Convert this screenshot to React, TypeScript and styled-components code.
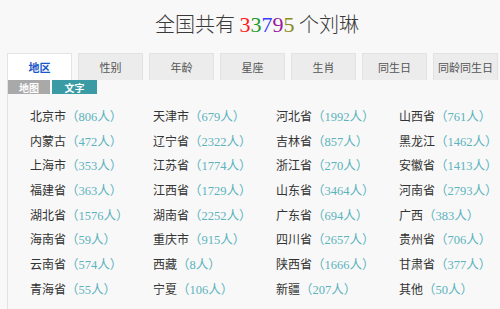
import styled, { createGlobalStyle } from "styled-components";

const GlobalStyle = createGlobalStyle`
	body {
		margin: 0;
		background: #f8f8f8;
		font-family: "Noto Sans CJK SC", "Noto Sans", sans-serif;
		color: #333;
	}
`;

const Page = styled.div`
	width: 500px;
	height: 309px;
	overflow: hidden;
`;

const Title = styled.h1`
	margin: 0;
	height: 53px;
	padding: 10px 0 0 14px;
	box-sizing: border-box;
	text-align: center;
	font-size: 20px;
	font-weight: 300;
	line-height: 28px;
	color: #3a3a3a;
`;

const Digit = styled.span<{ $color: string }>`
	font-family: "Liberation Serif", serif;
	font-size: 22px;
	color: ${(p) => p.$color};
`;

const TabBar = styled.div`
	display: flex;
	gap: 6px;
	padding-left: 7px;
	height: 27px;
`;

const Tab = styled.div<{ $active?: boolean }>`
	width: 65px;
	box-sizing: border-box;
	display: flex;
	align-items: center;
	justify-content: center;
	font-size: 11px;
	background: ${(p) => (p.$active ? "#fff" : "#ececec")};
	border: 1px solid ${(p) => (p.$active ? "#e4e4e4" : "#e2e2e2")};
	border-bottom: none;
	color: ${(p) => (p.$active ? "#1858c8" : "#555")};
	font-weight: ${(p) => (p.$active ? "bold" : "normal")};
`;

const Panel = styled.div`
	margin-left: 7px;
	border-left: 1px solid #e2e2e2;
	height: 229px;
`;

const SubTabs = styled.div`
	display: flex;
	gap: 2px;
	height: 14px;
`;

const SubTab = styled.div<{ $active?: boolean }>`
	width: ${(p) => (p.$active ? 45 : 42)}px;
	display: flex;
	align-items: center;
	justify-content: center;
	font-size: 10px;
	font-weight: bold;
	color: #fff;
	background: ${(p) => (p.$active ? "#3a9ba4" : "#a9a9a9")};
`;

const List = styled.div`
	display: grid;
	grid-template-columns: repeat(4, 123px);
	grid-auto-rows: 24.7px;
	padding: 9px 0 0 22px;
`;

const Item = styled.div`
	display: flex;
	align-items: center;
	font-size: 12px;
	white-space: nowrap;
`;

const Name = styled.span`
	color: #333;
`;

const Count = styled.span`
	font-family: "Liberation Serif", "Noto Sans CJK SC", serif;
	font-size: 12.5px;
	color: #5bb3bd;
`;

const digits: [string, string][] = [
	["3", "#ff1a1a"],
	["3", "#1e9a2a"],
	["7", "#3a3aff"],
	["9", "#9a1aa0"],
	["5", "#8a8a1a"],
];

const tabs = ["地区", "性别", "年龄", "星座", "生肖", "同生日", "同龄同生日"];

const regions: [string, number][] = [
	["北京市", 806], ["天津市", 679], ["河北省", 1992], ["山西省", 761],
	["内蒙古", 472], ["辽宁省", 2322], ["吉林省", 857], ["黑龙江", 1462],
	["上海市", 353], ["江苏省", 1774], ["浙江省", 270], ["安徽省", 1413],
	["福建省", 363], ["江西省", 1729], ["山东省", 3464], ["河南省", 2793],
	["湖北省", 1576], ["湖南省", 2252], ["广东省", 694], ["广西", 383],
	["海南省", 59], ["重庆市", 915], ["四川省", 2657], ["贵州省", 706],
	["云南省", 574], ["西藏", 8], ["陕西省", 1666], ["甘肃省", 377],
	["青海省", 55], ["宁夏", 106], ["新疆", 207], ["其他", 50],
];

export default function App() {
	return (
		<Page>
			<GlobalStyle />
			<Title>
				全国共有{" "}
				{digits.map(([d, c], i) => (
					<Digit key={i} $color={c}>{d}</Digit>
				))}{" "}
				个刘琳
			</Title>
			<TabBar>
				{tabs.map((t, i) => (
					<Tab key={t} $active={i === 0}>{t}</Tab>
				))}
			</TabBar>
			<Panel>
				<SubTabs>
					<SubTab>地图</SubTab>
					<SubTab $active>文字</SubTab>
				</SubTabs>
				<List>
					{regions.map(([name, n]) => (
						<Item key={name}>
							<Name>{name}</Name>
							<Count>（{n}人）</Count>
						</Item>
					))}
				</List>
			</Panel>
		</Page>
	);
}
